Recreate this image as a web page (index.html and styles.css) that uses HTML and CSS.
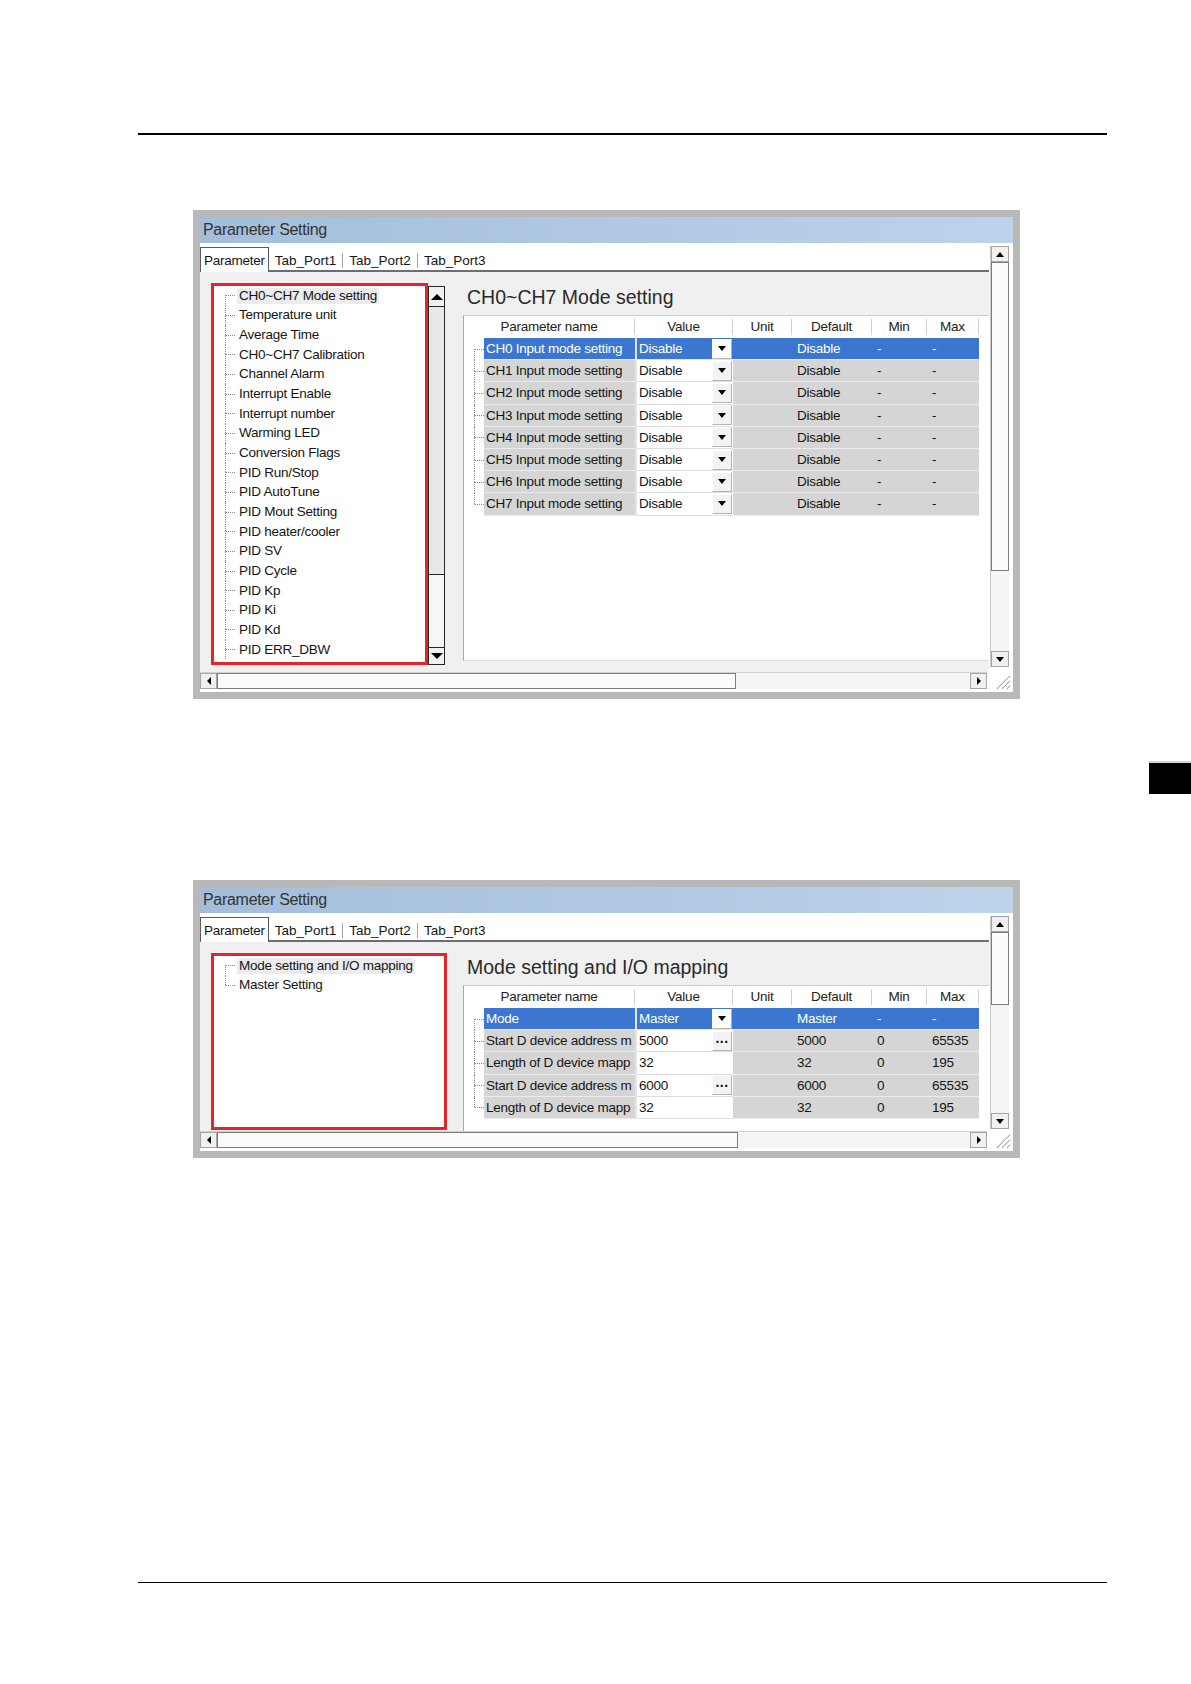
FILE: index.html
```html
<!DOCTYPE html>
<html lang="en">
<head>
    <meta charset="UTF-8">
    <meta name="viewport" content="width=device-width, initial-scale=1.0">
    <title>Parameter Setting</title>
    <link rel="stylesheet" href="styles.css">
</head>
<body>
    <div class="rule-top"></div>

    <!-- first screen: analog module -->
    <div class="window win-a">
        <div class="titlebar">Parameter Setting</div>
        <div class="client">
            <div class="main">
                <div class="tabs">
                    <span class="tab active">Parameter</span>
                    <span class="tab">Tab_Port1</span>
                    <span class="tab-sep"></span>
                    <span class="tab">Tab_Port2</span>
                    <span class="tab-sep"></span>
                    <span class="tab">Tab_Port3</span>
                </div>
                <div class="page">
                    <div class="tree-box">
                        <ul class="tree">
                            <li class="first"><i class="br"></i><span class="label sel">CH0~CH7 Mode setting</span></li>
                            <li><i class="br"></i><span class="label">Temperature unit</span></li>
                            <li><i class="br"></i><span class="label">Average Time</span></li>
                            <li><i class="br"></i><span class="label">CH0~CH7 Calibration</span></li>
                            <li><i class="br"></i><span class="label">Channel Alarm</span></li>
                            <li><i class="br"></i><span class="label">Interrupt Enable</span></li>
                            <li><i class="br"></i><span class="label">Interrupt number</span></li>
                            <li><i class="br"></i><span class="label">Warming LED</span></li>
                            <li><i class="br"></i><span class="label">Conversion Flags</span></li>
                            <li><i class="br"></i><span class="label">PID Run/Stop</span></li>
                            <li><i class="br"></i><span class="label">PID AutoTune</span></li>
                            <li><i class="br"></i><span class="label">PID Mout Setting</span></li>
                            <li><i class="br"></i><span class="label">PID heater/cooler</span></li>
                            <li><i class="br"></i><span class="label">PID SV</span></li>
                            <li><i class="br"></i><span class="label">PID Cycle</span></li>
                            <li><i class="br"></i><span class="label">PID Kp</span></li>
                            <li><i class="br"></i><span class="label">PID Ki</span></li>
                            <li><i class="br"></i><span class="label">PID Kd</span></li>
                            <li><i class="br"></i><span class="label">PID ERR_DBW</span></li>
                        </ul>
                        <div class="tree-scroll">
                            <span class="sb-btn up"><i class="tri-up"></i></span>
                            <span class="thumb"></span>
                            <span class="track"></span>
                            <span class="sb-btn down"><i class="tri-down"></i></span>
                        </div>
                    </div>
                    <div class="pane">
                        <div class="pane-title">CH0~CH7 Mode setting</div>
                        <div class="grid">
                            <div class="grid-head">
                                <span>Parameter name</span>
                                <span>Value</span>
                                <span>Unit</span>
                                <span>Default</span>
                                <span>Min</span>
                                <span>Max</span>
                            </div>
                            <div class="grid-row sel first">
                                <i class="br"></i>
                                <span class="c-name">CH0 Input mode setting</span>
                                <span class="c-val">Disable<b class="dd"><i class="tri-down"></i></b></span>
                                <span class="c-unit"></span>
                                <span class="c-def">Disable</span>
                                <span class="c-min">-</span>
                                <span class="c-max">-</span>
                            </div>
                            <div class="grid-row">
                                <i class="br"></i>
                                <span class="c-name">CH1 Input mode setting</span>
                                <span class="c-val">Disable<b class="dd"><i class="tri-down"></i></b></span>
                                <span class="c-unit"></span>
                                <span class="c-def">Disable</span>
                                <span class="c-min">-</span>
                                <span class="c-max">-</span>
                            </div>
                            <div class="grid-row">
                                <i class="br"></i>
                                <span class="c-name">CH2 Input mode setting</span>
                                <span class="c-val">Disable<b class="dd"><i class="tri-down"></i></b></span>
                                <span class="c-unit"></span>
                                <span class="c-def">Disable</span>
                                <span class="c-min">-</span>
                                <span class="c-max">-</span>
                            </div>
                            <div class="grid-row">
                                <i class="br"></i>
                                <span class="c-name">CH3 Input mode setting</span>
                                <span class="c-val">Disable<b class="dd"><i class="tri-down"></i></b></span>
                                <span class="c-unit"></span>
                                <span class="c-def">Disable</span>
                                <span class="c-min">-</span>
                                <span class="c-max">-</span>
                            </div>
                            <div class="grid-row">
                                <i class="br"></i>
                                <span class="c-name">CH4 Input mode setting</span>
                                <span class="c-val">Disable<b class="dd"><i class="tri-down"></i></b></span>
                                <span class="c-unit"></span>
                                <span class="c-def">Disable</span>
                                <span class="c-min">-</span>
                                <span class="c-max">-</span>
                            </div>
                            <div class="grid-row">
                                <i class="br"></i>
                                <span class="c-name">CH5 Input mode setting</span>
                                <span class="c-val">Disable<b class="dd"><i class="tri-down"></i></b></span>
                                <span class="c-unit"></span>
                                <span class="c-def">Disable</span>
                                <span class="c-min">-</span>
                                <span class="c-max">-</span>
                            </div>
                            <div class="grid-row">
                                <i class="br"></i>
                                <span class="c-name">CH6 Input mode setting</span>
                                <span class="c-val">Disable<b class="dd"><i class="tri-down"></i></b></span>
                                <span class="c-unit"></span>
                                <span class="c-def">Disable</span>
                                <span class="c-min">-</span>
                                <span class="c-max">-</span>
                            </div>
                            <div class="grid-row last">
                                <i class="br"></i>
                                <span class="c-name">CH7 Input mode setting</span>
                                <span class="c-val">Disable<b class="dd"><i class="tri-down"></i></b></span>
                                <span class="c-unit"></span>
                                <span class="c-def">Disable</span>
                                <span class="c-min">-</span>
                                <span class="c-max">-</span>
                            </div>
                        </div>
                    </div>
                </div>
            </div>
            <div class="vscroll">
                <span class="sb-btn up"><i class="tri-up"></i></span>
                <span class="thumb"></span>
                <span class="track"></span>
                <span class="sb-btn down"><i class="tri-down"></i></span>
            </div>
            <div class="hscroll">
                <span class="sb-btn left"><i class="tri-left"></i></span>
                <span class="thumb"></span>
                <span class="track"></span>
                <span class="sb-btn right"><i class="tri-right"></i></span>
            </div>
            <div class="grip">
                <svg width="18" height="18" viewBox="0 0 18 18">
                    <path d="M4 17L17 4M9 17L17 9M14 17L17 14" stroke="#a9a9a9" stroke-width="1.2"/>
                    <path d="M5 17L17 5M10 17L17 10M15 17L17 15" stroke="#fff" stroke-width="1"/>
                </svg>
            </div>
        </div>
    </div>

    <div class="side-tab"></div>

    <!-- second screen: communication module -->
    <div class="window win-b">
        <div class="titlebar">Parameter Setting</div>
        <div class="client">
            <div class="main">
                <div class="tabs">
                    <span class="tab active">Parameter</span>
                    <span class="tab">Tab_Port1</span>
                    <span class="tab-sep"></span>
                    <span class="tab">Tab_Port2</span>
                    <span class="tab-sep"></span>
                    <span class="tab">Tab_Port3</span>
                </div>
                <div class="page">
                    <div class="tree-box">
                        <ul class="tree">
                            <li class="first"><i class="br"></i><span class="label sel">Mode setting and I/O mapping</span></li>
                            <li class="last"><i class="br"></i><span class="label">Master Setting</span></li>
                        </ul>
                    </div>
                    <div class="pane">
                        <div class="pane-title">Mode setting and I/O mapping</div>
                        <div class="grid">
                            <div class="grid-head">
                                <span>Parameter name</span>
                                <span>Value</span>
                                <span>Unit</span>
                                <span>Default</span>
                                <span>Min</span>
                                <span>Max</span>
                            </div>
                            <div class="grid-row sel first">
                                <i class="br"></i>
                                <span class="c-name">Mode</span>
                                <span class="c-val">Master<b class="dd"><i class="tri-down"></i></b></span>
                                <span class="c-unit"></span>
                                <span class="c-def">Master</span>
                                <span class="c-min">-</span>
                                <span class="c-max">-</span>
                            </div>
                            <div class="grid-row">
                                <i class="br"></i>
                                <span class="c-name">Start D device address m</span>
                                <span class="c-val">5000<b class="dd dots">...</b></span>
                                <span class="c-unit"></span>
                                <span class="c-def">5000</span>
                                <span class="c-min">0</span>
                                <span class="c-max">65535</span>
                            </div>
                            <div class="grid-row">
                                <i class="br"></i>
                                <span class="c-name">Length of D device mapp</span>
                                <span class="c-val">32</span>
                                <span class="c-unit"></span>
                                <span class="c-def">32</span>
                                <span class="c-min">0</span>
                                <span class="c-max">195</span>
                            </div>
                            <div class="grid-row">
                                <i class="br"></i>
                                <span class="c-name">Start D device address m</span>
                                <span class="c-val">6000<b class="dd dots">...</b></span>
                                <span class="c-unit"></span>
                                <span class="c-def">6000</span>
                                <span class="c-min">0</span>
                                <span class="c-max">65535</span>
                            </div>
                            <div class="grid-row last">
                                <i class="br"></i>
                                <span class="c-name">Length of D device mapp</span>
                                <span class="c-val">32</span>
                                <span class="c-unit"></span>
                                <span class="c-def">32</span>
                                <span class="c-min">0</span>
                                <span class="c-max">195</span>
                            </div>
                        </div>
                    </div>
                </div>
            </div>
            <div class="vscroll">
                <span class="sb-btn up"><i class="tri-up"></i></span>
                <span class="thumb"></span>
                <span class="track"></span>
                <span class="sb-btn down"><i class="tri-down"></i></span>
            </div>
            <div class="hscroll">
                <span class="sb-btn left"><i class="tri-left"></i></span>
                <span class="thumb"></span>
                <span class="track"></span>
                <span class="sb-btn right"><i class="tri-right"></i></span>
            </div>
            <div class="grip">
                <svg width="18" height="18" viewBox="0 0 18 18">
                    <path d="M4 17L17 4M9 17L17 9M14 17L17 14" stroke="#a9a9a9" stroke-width="1.2"/>
                    <path d="M5 17L17 5M10 17L17 10M15 17L17 15" stroke="#fff" stroke-width="1"/>
                </svg>
            </div>
        </div>
    </div>

    <div class="rule-bottom"></div>
</body>
</html>
```

FILE: styles.css
```css
body {
    margin: 0;
    width: 1191px;
    background: #fff;
    font-family: "Liberation Sans", Arial, sans-serif;
    font-size: 13.5px;
    letter-spacing: -0.25px;
    color: #151515;
}
.rule-top {
    margin: 133px 0 0 138px;
    width: 969px;
    border-top: 2px solid #000;
}
.rule-bottom {
    margin: 424px 0 0 138px;
    width: 969px;
    border-top: 1px solid #000;
}
.side-tab {
    margin: 62px 0 0 1149px;
    width: 42px;
    height: 31px;
    background: #000;
    border-top: 2px solid #d4d4d4;
}

/* window frame */
.window {
    width: 813px;
    margin-left: 193px;
    border: 7px solid #b8b8b8;
    background: #fff;
}
.win-a { margin-top: 75px; }
.win-b { margin-top: 86px; }
.titlebar {
    height: 26px;
    line-height: 26px;
    padding-left: 3px;
    font-size: 16px;
    letter-spacing: -0.3px;
    color: #333;
    background: linear-gradient(to right, #a3bddb, #bdd3ea);
}
.client {
    display: grid;
    grid-template-columns: 789px 24px;
}
.win-a .client { grid-template-rows: 429px 20px; }
.win-b .client { grid-template-rows: 218px 20px; }
.main {
    display: flex;
    flex-direction: column;
    min-height: 0;
    overflow: hidden;
}

/* tabs */
.tabs {
    height: 27px;
    display: flex;
    align-items: flex-end;
    background: #fff;
    border-bottom: 2px solid #6e6e6e;
}
.tab {
    height: 18px;
    line-height: 18px;
    padding: 0 6px;
    letter-spacing: 0;
    white-space: nowrap;
}
.tab.active {
    height: 24px;
    line-height: 26px;
    padding: 0 3px;
    margin-bottom: -2px;
    letter-spacing: -0.25px;
    border: 1px solid #5a5a5a;
    border-bottom: none;
    background: #fff;
}
.tab-sep {
    width: 1px;
    height: 15px;
    margin-bottom: 2px;
    background: #a3a3a3;
}

/* page body */
.page {
    flex: 1;
    display: flex;
    padding: 11px 0 0 11px;
    background: #f0f0f0;
    min-height: 0;
    overflow: hidden;
}
.tree-box {
    display: flex;
    width: 234px;
}
.win-a .tree-box { margin-bottom: 7px; }
.win-b .tree-box { width: 236px; margin-bottom: 1px; }
.tree {
    flex: 1;
    margin: 0;
    padding: 0;
    list-style: none;
    background: #fff;
    border: 3px solid #e3242b;
    overflow: hidden;
}
.tree li {
    display: flex;
    align-items: center;
    height: 19.67px;
}
.br {
    display: flex;
    flex-direction: column;
    flex: none;
    align-self: stretch;
    width: 10px;
}
.br::before {
    content: "";
    flex: 1;
    border-left: 1px dotted #8c8c8c;
}
.br::after {
    content: "";
    flex: 1;
    border-left: 1px dotted #8c8c8c;
    border-top: 1px dotted #8c8c8c;
}
.first .br::before { border-left-color: transparent; }
.last .br::after { border-left-color: transparent; }
.tree .br { margin-left: 11px; }
.label {
    margin-left: 2px;
    padding: 0 2px;
    line-height: 16px;
    white-space: nowrap;
}
.label.sel { background: #ececec; }

.tree-scroll {
    width: 17px;
    margin-top: 3px;
    box-sizing: border-box;
    border: 1px solid #262626;
    display: flex;
    flex-direction: column;
    background: #f6f6f6;
}
.tree-scroll .sb-btn { border: none; height: 19px; }
.tree-scroll .sb-btn.down { height: 17px; border-top: 1px solid #262626; }
.tree-scroll .thumb {
    height: 269px;
    border: none;
    border-top: 1px solid #262626;
    border-bottom: 1px solid #262626;
    background: #e8e8e8;
}

/* right pane */
.pane {
    width: 526px;
    margin-left: auto;
    padding-top: 2px;
    display: flex;
    flex-direction: column;
}
.pane-title {
    height: 24px;
    line-height: 24px;
    margin-bottom: 6px;
    padding-left: 4px;
    font-size: 19.5px;
    letter-spacing: 0;
    color: #2a2a2a;
    white-space: nowrap;
}
.grid {
    flex: 1;
    background: #fff;
    border-left: 1px solid #a9a9a9;
    border-top: 1px solid #cdcdcd;
}
.win-a .grid {
    margin-bottom: 11px;
    border-bottom: 1px solid #dcdcdc;
}
.grid-head {
    display: grid;
    grid-template-columns: 171px 98px 59px 80px 55px 52px;
    height: 22px;
    align-items: center;
    text-align: center;
    color: #222;
}
.grid-head span {
    line-height: 16px;
    border-right: 1px solid #d0d0d0;
}
.grid-row {
    display: grid;
    grid-template-columns: 20px 151px 98px 59px 80px 55px 52px;
    height: 22.2px;
}
.grid-row .br { margin-left: 10px; }
.grid-row > span {
    display: flex;
    align-items: center;
    padding-left: 5px;
    background: #d5d5d5;
    border-bottom: 1px solid #ececec;
    white-space: nowrap;
    overflow: hidden;
}
.grid-row > .c-name { padding-left: 2px; }
.grid-row > .c-val {
    padding-left: 2px;
    background: #fff;
    border-left: 2px solid #e4e4e4;
    border-bottom-color: #dedede;
}
.grid-row.sel > span {
    background: #3b76d1;
    color: #fff;
    border-bottom-color: #e6e6e6;
}
.dd {
    display: flex;
    align-items: center;
    justify-content: center;
    flex: none;
    width: 20px;
    height: 20px;
    margin: 0 1px 0 auto;
    box-sizing: border-box;
    background: #f3f3f3;
    border: 1px solid;
    border-color: #fff #b2b2b2 #b2b2b2 #fff;
}
.sel .dd { background: #fbfbfb; }
.dots {
    color: #111;
    font-size: 14px;
    letter-spacing: 0.5px;
    line-height: 10px;
    padding-bottom: 6px;
}

/* scrollbars */
.vscroll {
    grid-column: 2;
    grid-row: 1;
    align-self: start;
    width: 19px;
    margin: 3px 0 0 1px;
    display: flex;
    flex-direction: column;
    background: #f5f5f5;
    border-left: 1px solid #c8c8c8;
    box-sizing: border-box;
}
.win-a .vscroll { height: 421px; }
.win-b .vscroll { height: 213px; }
.win-a .vscroll .thumb { height: 309px; }
.win-b .vscroll .thumb { height: 73px; }
.hscroll {
    grid-column: 1;
    grid-row: 2;
    height: 17px;
    width: 787px;
    display: flex;
    background: #f5f5f5;
    border-top: 1px solid #d0d0d0;
    box-sizing: border-box;
}
.win-a .hscroll .thumb { width: 519px; }
.win-b .hscroll .thumb { width: 521px; }
.sb-btn {
    flex: none;
    display: flex;
    align-items: center;
    justify-content: center;
    height: 16px;
    box-sizing: border-box;
    background: #f0f0f0;
    border: 1px solid #a5a5a5;
}
.hscroll .sb-btn { width: 17px; height: auto; }
.thumb {
    flex: none;
    box-sizing: border-box;
    background: #fbfbfb;
    border: 1px solid #7d7d7d;
}
.track { flex: 1; }
.grip {
    grid-column: 2;
    grid-row: 2;
    display: flex;
    align-items: flex-end;
    justify-content: flex-end;
    padding: 0 2px 2px 0;
}

.tri-up, .tri-down, .tri-left, .tri-right {
    display: block;
    width: 0;
    height: 0;
}
.tri-down {
    border-left: 4px solid transparent;
    border-right: 4px solid transparent;
    border-top: 5px solid #000;
}
.tri-up {
    border-left: 4px solid transparent;
    border-right: 4px solid transparent;
    border-bottom: 5px solid #000;
}
.dd .tri-down {
    border-left-width: 4.5px;
    border-right-width: 4.5px;
}
.tree-scroll .tri-up, .tree-scroll .tri-down {
    border-left-width: 6px;
    border-right-width: 6px;
}
.tree-scroll .tri-up { border-bottom-width: 6px; }
.tree-scroll .tri-down { border-top-width: 6px; }
.tri-left {
    border-top: 4px solid transparent;
    border-bottom: 4px solid transparent;
    border-right: 4px solid #000;
}
.tri-right {
    border-top: 4px solid transparent;
    border-bottom: 4px solid transparent;
    border-left: 4px solid #000;
}
```
